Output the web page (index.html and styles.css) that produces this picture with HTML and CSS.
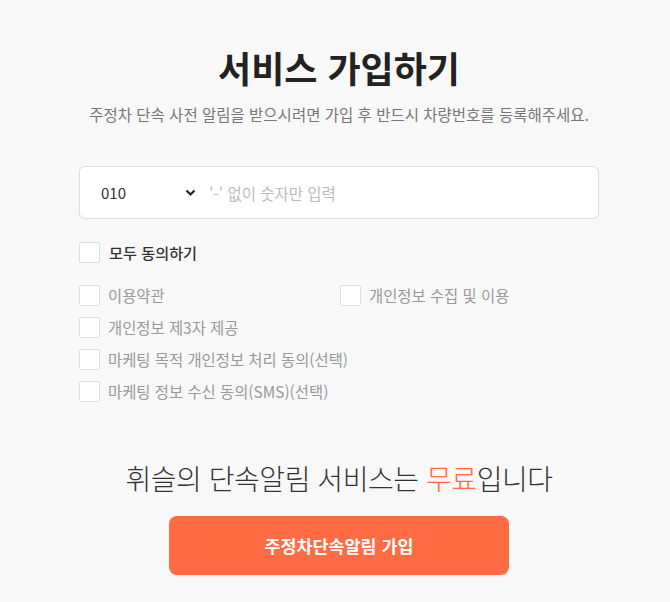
FILE: index.html
```html
<!DOCTYPE html>
<html lang="ko">
<head>
<meta charset="utf-8">
<title>서비스 가입하기</title>
<link rel="stylesheet" href="styles.css">
</head>
<body>
<main class="page">
  <h1 class="title">서비스 가입하기</h1>
  <p class="subtitle">주정차 단속 사전 알림을 받으시려면 가입 후 반드시 차량번호를 등록해주세요.</p>

  <div class="phone">
    <div class="select">
      <span class="select-value">010</span>
      <svg class="chev" width="11" height="8" viewBox="0 0 11 8"><path d="M1.5 1.5 L5.5 5.5 L9.5 1.5" fill="none" stroke="#222" stroke-width="2.2"/></svg>
    </div>
    <span class="placeholder">'-' 없이 숫자만 입력</span>
  </div>

  <div class="agree-all">
    <span class="box"></span>
    <span class="all-label">모두 동의하기</span>
  </div>

  <div class="terms">
    <div class="term"><span class="box"></span><span>이용약관</span></div>
    <div class="term"><span class="box"></span><span>개인정보 수집 및 이용</span></div>
    <div class="term wide"><span class="box"></span><span>개인정보 제3자 제공</span></div>
    <div class="term wide"><span class="box"></span><span>마케팅 목적 개인정보 처리 동의(선택)</span></div>
    <div class="term wide"><span class="box"></span><span>마케팅 정보 수신 동의(SMS)(선택)</span></div>
  </div>

  <p class="tagline">휘슬의 단속알림 서비스는 <span class="accent">무료</span>입니다</p>

  <button class="cta">주정차단속알림 가입</button>
</main>
</body>
</html>
```
FILE: styles.css
```css
* { box-sizing: border-box; }
html, body {
  margin: 0;
  background: #f8f8f8;
  font-family: "Noto Sans CJK KR", "Noto Sans", sans-serif;
  color: #222;
}
.page {
  padding: 44px 0 0 8px;
  display: flex;
  flex-direction: column;
  align-items: center;
}
.title {
  margin: 0;
  font-size: 36px;
  line-height: 46px;
  font-weight: 700;
  color: #222;
}
.subtitle {
  margin: 14px 0 0;
  font-size: 15.5px;
  line-height: 20px;
  color: #777;
}
.phone {
  margin-top: 42px;
  width: 520px;
  height: 53px;
  background: #fff;
  border: 1px solid #ddd;
  border-radius: 6px;
  display: flex;
  align-items: center;
}
.select {
  width: 129px;
  padding: 0 13px 0 21px;
  display: flex;
  align-items: center;
  justify-content: space-between;
}
.select-value {
  font-size: 15px;
  color: #333;
}
.chev { display: block; }
.placeholder {
  font-size: 15.5px;
  color: #bbb;
}
.agree-all {
  margin-top: 22px;
  width: 520px;
  display: flex;
  align-items: center;
  gap: 9px;
}
.box {
  width: 21px;
  height: 21px;
  flex: none;
  background: #fff;
  border: 1px solid #ddd;
  border-radius: 2px;
}
.all-label {
  font-size: 15.2px;
  font-weight: 500;
  color: #333;
}
.terms {
  margin-top: 22px;
  width: 520px;
  display: grid;
  grid-template-columns: 261px 1fr;
  row-gap: 11px;
}
.term {
  display: flex;
  align-items: center;
  gap: 8px;
  font-size: 15.4px;
  line-height: 21px;
  color: #999;
  white-space: nowrap;
}
.term.wide { grid-column: 1 / -1; }
.tagline {
  margin: 59px 0 0;
  font-size: 28px;
  line-height: 34px;
  letter-spacing: -0.45px;
  font-weight: 300;
  color: #333;
}
.accent { color: #ff6b44; }
.cta {
  margin-top: 21px;
  width: 340px;
  height: 59px;
  border: none;
  border-radius: 8px;
  background: #ff6c43;
  color: #fff;
  font-family: inherit;
  font-size: 17.4px;
  font-weight: 700;
}
```
